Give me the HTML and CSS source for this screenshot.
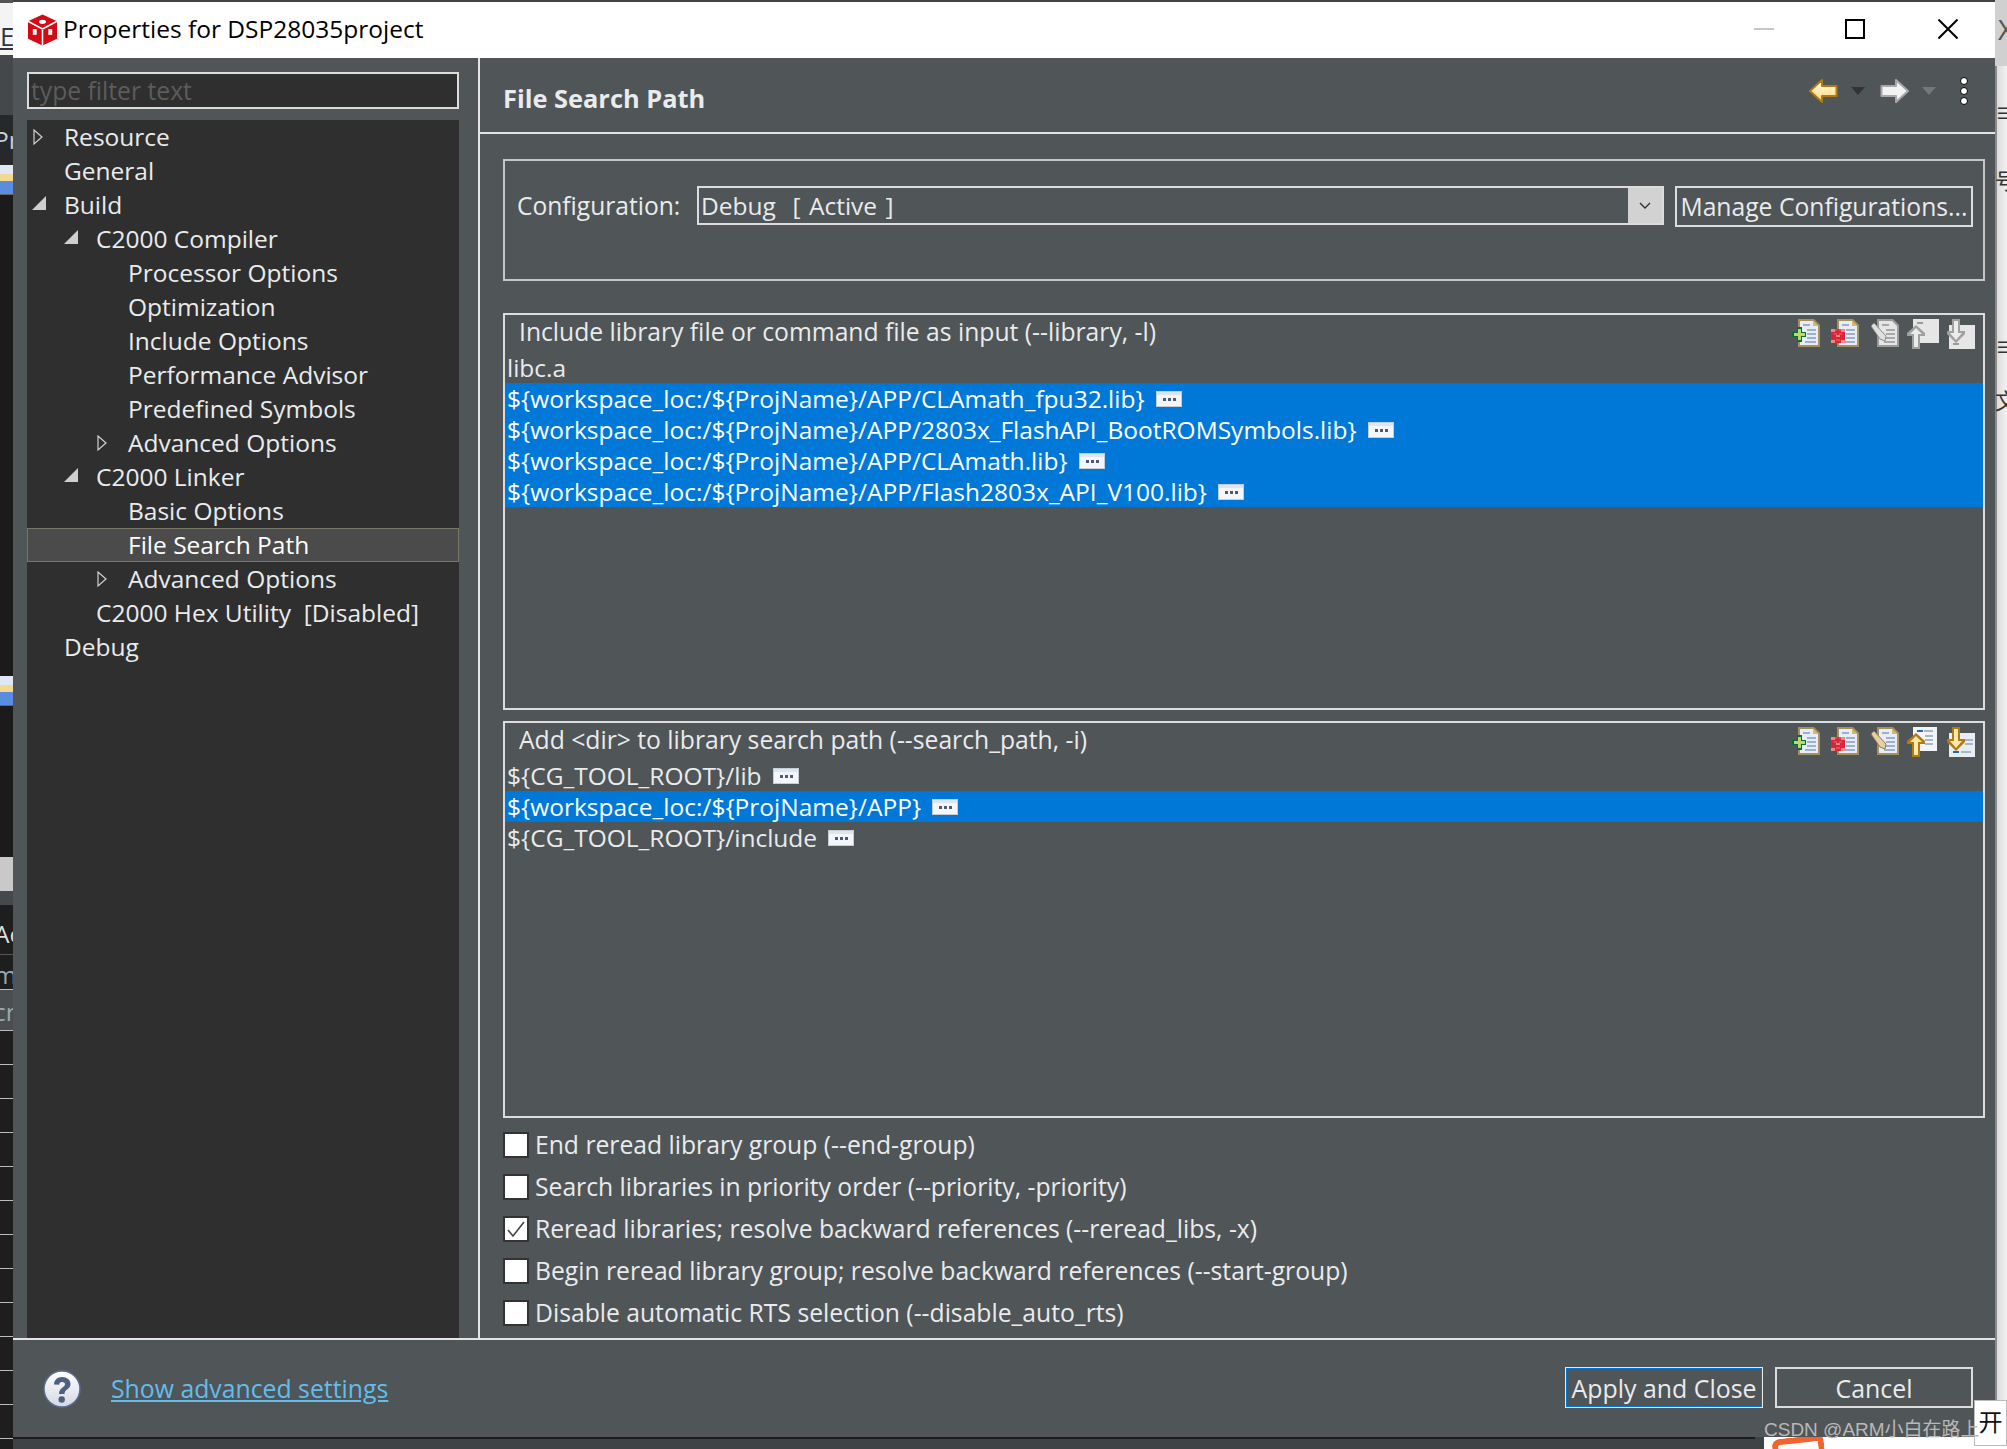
FILE: index.html
```html
<!DOCTYPE html>
<html lang="en">
<head>
<meta charset="utf-8">
<title>Properties for DSP28035project</title>
<link rel="stylesheet" href="styles.css">
</head>
<body>
<svg class="defs" width="0" height="0" aria-hidden="true">
  <defs>
    <g id="page">
      <path d="M6 0H22L28 6V28H6Z" fill="#a8905c"/>
      <path d="M8 2H21L26 7V26H8Z" fill="#e6ecf8"/>
      <path d="M21 2L26 7H21Z" fill="#d9b76a"/>
      <path d="M11 5h7v2h-7zM15 10h9v2h-9zM15 14h9v2h-9zM15 18h9v2h-9zM13 22h11v2H13z" fill="#9fb0cc"/>
    </g>
    <g id="pageGray">
      <path d="M6 0H22L28 6V28H6Z" fill="#9a9a9a"/>
      <path d="M8 2H21L26 7V26H8Z" fill="#e6e6e6"/>
      <path d="M11 5h7v2h-7zM15 10h9v2h-9zM15 14h9v2h-9zM15 18h9v2h-9zM13 22h11v2H13z" fill="#a8a8a8"/>
    </g>
    <g id="plus">
      <path d="M5 8h5v5h4v5h-4v5H5v-5H0v-5h5z" fill="#0c6a3a"/>
      <path d="M6 10h3v4h4v3H9v4H6v-4H2v-3h4z" fill="#bcd86a"/>
    </g>
    <g id="cross">
      <path d="M0 10h14v14H0z" fill="#d7263d"/>
      <path d="M0 10h4v3H0zM10 10h4v3h-4zM5 16h4v2H5zM0 21h4v3H0zM10 21h4v3h-4z" fill="#e88a8a"/>
      <path d="M4 10h2v2H4zM8 10h2v2H8zM3 14h3v2H3zM8 14h3v2H8zM5 20h4v2H5z" fill="#f2444f"/>
    </g>
    <g id="pen">
      <path d="M0 7l3-3 12 13-1 5-5-2z" fill="#e6d0a0" stroke="#8a7a58"/>
    </g>
    <g id="penGray">
      <path d="M0 7l3-3 12 13-1 5-5-2z" fill="#e0e0e0" stroke="#8c8c8c"/>
    </g>
    <g id="back">
      <path d="M6 0h24v24H6z" fill="#f2f4f8"/>
      <path d="M10 3h6v2h-6zM17 3h9v2h-9zM18 8h8v2h-8zM18 12h8v2h-8zM18 16h8v2h-8z" fill="#a8b6cc"/>
      <path d="M10 3h6v2h-6z" fill="#2468a8"/>
    </g>
    <g id="backDown">
      <path d="M2 6h26v24H2z" fill="#e8ecf4"/>
      <path d="M6 24h6v2H6z" fill="#2468a8"/>
      <path d="M14 24h10v2H14zM18 12h8v2h-8zM18 16h8v2h-8z" fill="#a8b6cc"/>
    </g>
    <g id="backGray"><path d="M6 0h26v24H6z" fill="#e6e6e6"/><path d="M10 3h6v2h-6z" fill="#9a9a9a"/></g>
    <g id="backDownGray"><path d="M2 6h26v24H2z" fill="#e6e6e6"/><path d="M6 24h6v2H6z" fill="#9a9a9a"/></g>
    <symbol id="i-add" viewBox="0 0 28 28"><use href="#page"/><use href="#plus"/></symbol>
    <symbol id="i-del" viewBox="0 0 28 28"><use href="#page"/><use href="#cross"/></symbol>
    <symbol id="i-edit" viewBox="0 0 28 28"><use href="#page"/><use href="#pen"/></symbol>
    <symbol id="i-edit-off" viewBox="0 0 28 28"><use href="#pageGray"/><use href="#penGray"/></symbol>
    <symbol id="i-up" viewBox="0 0 32 32"><use href="#back"/><path d="M9 6L18 14V17H13V30H5V17H0V14Z" fill="#b07a14"/><path d="M9 9L15 15H11V28H7V15H3Z" fill="#ffe9a8"/></symbol>
    <symbol id="i-down" viewBox="0 0 32 32"><use href="#backDown"/><path d="M5 0H13V12H18V15L9 24L0 15V12H5Z" fill="#b07a14"/><path d="M7 2H11V14H15L9 21L3 14H7Z" fill="#ffe9a8"/></symbol>
    <symbol id="i-up-off" viewBox="0 0 32 32"><use href="#backGray"/><path d="M9 6L18 14V17H13V30H5V17H0V14Z" fill="#a0a0a0"/><path d="M9 9L15 15H11V28H7V15H3Z" fill="#ececec"/></symbol>
    <symbol id="i-down-off" viewBox="0 0 32 32"><use href="#backDownGray"/><path d="M5 0H13V12H18V15L9 24L0 15V12H5Z" fill="#a0a0a0"/><path d="M7 2H11V14H15L9 21L3 14H7Z" fill="#ececec"/></symbol>
    <symbol id="i-more" viewBox="0 0 26 16"><rect width="26" height="16" fill="#f4f6fa"/><rect x="0.5" y="0.5" width="25" height="15" fill="none" stroke="#c4ccd8"/><rect x="1" y="1" width="24" height="3" fill="#dfe5ee"/><path d="M7 7h3v3H7zM12 7h3v3h-3zM17 7h3v3h-3z" fill="#4a5a78"/></symbol>
    <symbol id="t-closed" viewBox="0 0 10 16"><path d="M1 1L9 8L1 15Z" fill="none" stroke="#d0d0d0" stroke-width="1.2"/></symbol>
    <symbol id="t-open" viewBox="0 0 14 14"><path d="M14 0V14H0Z" fill="#cfcfcf"/></symbol>
  </defs>
</svg>

<div class="behind behind-left">
  <div class="bl-title">E</div>
  <div class="bl-bar"></div>
  <div class="bl-pr"><span class="bl-shift">Pr</span></div>
  <div class="bl-icon"></div>
  <div class="bl-dark"></div>
  <div class="bl-icon"></div>
  <div class="bl-dark bl-dark-2"></div>
  <div class="bl-light"></div>
  <div class="bl-grey"></div>
  <div class="bl-band"><span class="bl-shift">Ac</span></div>
  <div class="bl-band bl-thin"><span class="bl-shift">m</span></div>
  <div class="bl-band bl-thin bl-sel"><span class="bl-shift">cr</span></div>
  <div class="bl-lines"></div>
</div>
<div class="behind behind-right">
  <div class="br-top">X</div>
  <div class="br-seg br-a">&#x2261;</div>
  <div class="br-seg br-b">&#x53F7;</div>
  <div class="br-seg br-c">&#x2261;</div>
  <div class="br-seg br-d">&#x6587;</div>
</div>
<div class="behind behind-bottom">
  <div class="bb-line"></div>
  <div class="bb-white"><span class="bb-orange"></span></div>
</div>

<main class="dialog">
  <header class="titlebar">
    <svg class="logo" viewBox="0 0 32 32" aria-hidden="true">
      <path d="M16 0L31 7V25L16 32L1 25V7Z" fill="#d40a14"/>
      <path d="M16 16V32M16 15L1 7M16 15L31 7" stroke="#fff" stroke-width="1.6" fill="none"/>
      <ellipse cx="16" cy="7.5" rx="3.6" ry="2.2" fill="#fff"/>
      <rect x="6" y="15" width="4" height="6" fill="#fff"/>
      <rect x="22" y="15" width="4" height="6" fill="#fff"/>
    </svg>
    <span class="title-text">Properties for DSP28035project</span>
    <div class="win-controls">
      <span class="win-min"></span>
      <span class="win-max"></span>
      <svg class="win-close" viewBox="0 0 20 20" aria-hidden="true"><path d="M0.5 0.5L19.5 19.5M19.5 0.5L0.5 19.5" stroke="#000" stroke-width="2"/></svg>
    </div>
  </header>

  <div class="main">
    <aside class="side">
      <div class="filter">type filter text</div>
      <ul class="tree">
        <li class="node l0"><span class="twisty"><svg class="tw-c"><use href="#t-closed"/></svg></span>Resource</li>
        <li class="node l0"><span class="twisty"></span>General</li>
        <li class="node l0"><span class="twisty"><svg class="tw-o"><use href="#t-open"/></svg></span>Build</li>
        <li class="node l1"><span class="twisty"><svg class="tw-o"><use href="#t-open"/></svg></span>C2000 Compiler</li>
        <li class="node l2"><span class="twisty"></span>Processor Options</li>
        <li class="node l2"><span class="twisty"></span>Optimization</li>
        <li class="node l2"><span class="twisty"></span>Include Options</li>
        <li class="node l2"><span class="twisty"></span>Performance Advisor</li>
        <li class="node l2"><span class="twisty"></span>Predefined Symbols</li>
        <li class="node l2"><span class="twisty"><svg class="tw-c"><use href="#t-closed"/></svg></span>Advanced Options</li>
        <li class="node l1"><span class="twisty"><svg class="tw-o"><use href="#t-open"/></svg></span>C2000 Linker</li>
        <li class="node l2"><span class="twisty"></span>Basic Options</li>
        <li class="node l2 current"><span class="twisty"></span>File Search Path</li>
        <li class="node l2"><span class="twisty"><svg class="tw-c"><use href="#t-closed"/></svg></span>Advanced Options</li>
        <li class="node l1"><span class="twisty"></span>C2000 Hex Utility&nbsp; [Disabled]</li>
        <li class="node l0"><span class="twisty"></span>Debug</li>
      </ul>
    </aside>

    <section class="content">
      <div class="page-head">
        <h1 class="page-title">File Search Path</h1>
        <div class="nav">
          <svg class="nav-arrow" viewBox="0 0 29 24" aria-hidden="true"><defs><linearGradient id="gold" x1="0" y1="0" x2="0" y2="1"><stop offset="0" stop-color="#fffdf0"/><stop offset="1" stop-color="#ffd66e"/></linearGradient></defs><path d="M13 1L1 12L13 23V17H27.5V7H13Z" fill="url(#gold)" stroke="#b07a14" stroke-width="2" stroke-linejoin="round"/></svg>
          <span class="nav-drop"></span>
          <svg class="nav-arrow fwd" viewBox="0 0 29 24" aria-hidden="true"><path d="M16 1L28 12L16 23V17H1.5V7H16Z" fill="#f2f2f2" stroke="#a8a8a8" stroke-width="2" stroke-linejoin="round"/></svg>
          <span class="nav-drop off"></span>
          <div class="kebab"><i></i><i></i><i></i></div>
        </div>
      </div>

      <div class="body">
        <div class="config">
          <span class="config-label">Configuration:</span>
          <div class="combo"><span class="combo-text">Debug&nbsp; [ Active ]</span><span class="combo-btn"><svg viewBox="0 0 12 8" aria-hidden="true"><path d="M1 1L6 6L11 1" fill="none" stroke="#333" stroke-width="1.4"/></svg></span></div>
          <button class="btn manage">Manage Configurations...</button>
        </div>

        <section class="list">
          <div class="list-head">
            <span class="list-title">Include library file or command file as input (--library, -l)</span>
            <div class="tools">
              <svg class="tool t1"><use href="#i-add"/></svg>
              <svg class="tool t2"><use href="#i-del"/></svg>
              <svg class="tool t3"><use href="#i-edit-off"/></svg>
              <svg class="tool t4"><use href="#i-up-off"/></svg>
              <svg class="tool t5"><use href="#i-down-off"/></svg>
            </div>
          </div>
          <div class="row">libc.a</div>
          <div class="row sel">${workspace_loc:/${ProjName}/APP/CLAmath_fpu32.lib}<svg class="more"><use href="#i-more"/></svg></div>
          <div class="row sel">${workspace_loc:/${ProjName}/APP/2803x_FlashAPI_BootROMSymbols.lib}<svg class="more"><use href="#i-more"/></svg></div>
          <div class="row sel">${workspace_loc:/${ProjName}/APP/CLAmath.lib}<svg class="more"><use href="#i-more"/></svg></div>
          <div class="row sel">${workspace_loc:/${ProjName}/APP/Flash2803x_API_V100.lib}<svg class="more"><use href="#i-more"/></svg></div>
        </section>

        <section class="list">
          <div class="list-head">
            <span class="list-title">Add &lt;dir&gt; to library search path (--search_path, -i)</span>
            <div class="tools">
              <svg class="tool t1"><use href="#i-add"/></svg>
              <svg class="tool t2"><use href="#i-del"/></svg>
              <svg class="tool t3"><use href="#i-edit"/></svg>
              <svg class="tool t4"><use href="#i-up"/></svg>
              <svg class="tool t5"><use href="#i-down"/></svg>
            </div>
          </div>
          <div class="row">${CG_TOOL_ROOT}/lib<svg class="more"><use href="#i-more"/></svg></div>
          <div class="row sel">${workspace_loc:/${ProjName}/APP}<svg class="more"><use href="#i-more"/></svg></div>
          <div class="row">${CG_TOOL_ROOT}/include<svg class="more"><use href="#i-more"/></svg></div>
        </section>

        <div class="checks">
          <label class="check"><span class="box"></span><span class="check-text">End reread library group (--end-group)</span></label>
          <label class="check"><span class="box"></span><span class="check-text">Search libraries in priority order (--priority, -priority)</span></label>
          <label class="check"><span class="box"><svg viewBox="0 0 22 22" aria-hidden="true"><path d="M3 12L8 18L19 4" fill="none" stroke="#444" stroke-width="1.6"/></svg></span><span class="check-text">Reread libraries; resolve backward references (--reread_libs, -x)</span></label>
          <label class="check"><span class="box"></span><span class="check-text">Begin reread library group; resolve backward references (--start-group)</span></label>
          <label class="check"><span class="box"></span><span class="check-text">Disable automatic RTS selection (--disable_auto_rts)</span></label>
        </div>
      </div>
    </section>
  </div>

  <footer class="footer">
    <svg class="help" viewBox="0 0 38 38" aria-hidden="true">
      <defs><linearGradient id="helpg" x1="0" y1="0" x2="0" y2="1"><stop offset="0" stop-color="#ffffff"/><stop offset="1" stop-color="#d4d8e2"/></linearGradient></defs>
      <circle cx="19" cy="19" r="18" fill="url(#helpg)" stroke="#5a6c90" stroke-width="1.5"/>
      <path d="M11 14.5C11 10 14.5 7 19 7C24 7 27.5 10 27.5 14C27.5 19.5 21.5 19 21.5 24H16C16 17.5 22 17.5 22 14.2C22 12.8 20.8 12 19 12C17.2 12 16.2 13 16.2 14.8Z" fill="#4f5f80"/>
      <circle cx="18.7" cy="29.5" r="3.2" fill="#4f5f80"/>
    </svg>
    <a class="link" href="#">Show advanced settings</a>
    <div class="actions">
      <button class="btn action primary">Apply and Close</button>
      <button class="btn action">Cancel</button>
    </div>
  </footer>
</main>

<div class="tip">&#x5F00;</div>
<div class="watermark">CSDN @ARM小白在路上</div>
</body>
</html>
```
FILE: styles.css
```css
* { box-sizing: border-box; }
html, body { margin: 0; padding: 0; }
body {
  position: relative;
  width: 2007px;
  height: 1449px;
  overflow: hidden;
  background: #3f4346;
  font-family: "Open Sans", "Noto Sans", "Noto Sans CJK SC", sans-serif;
  font-size: 24.5px;
  color: #e9ebec;
}
.defs { position: absolute; }

/* windows behind the dialog */
.behind { position: absolute; overflow: hidden; }
.behind-left { left: 0; top: 0; width: 13px; height: 1449px; background: #1b1b1b; display: flex; flex-direction: column; }
.bl-title { height: 55px; padding-top: 18px; background: #f4f4f4; color: #334; font-size: 26px; line-height: 30px; text-decoration: underline; flex: none; border-top: 3px solid #555; }
.bl-bar { height: 60px; background: #44484b; flex: none; }
.bl-pr { height: 50px; background: #26282a; color: #c9d2dc; line-height: 50px; flex: none; white-space: nowrap; }
.bl-shift { display: block; margin-left: -6px; white-space: nowrap; }
.bl-icon { height: 30px; flex: none; background: linear-gradient(#dfe6f4 0 30%, #f4d890 30% 55%, #5a8ce0 55% 100%); border-bottom: 1px solid #666; }
.bl-dark { height: 481px; background: #1b1b1b; flex: none; }
.bl-dark-2 { height: 151px; }
.bl-light { height: 34px; background: #c9c9c9; flex: none; }
.bl-grey { height: 14px; background: #45494c; flex: none; }
.bl-band { height: 49px; background: #1e1e1e; color: #ddd; line-height: 58px; flex: none; }
.bl-thin { height: 35px; line-height: 40px; color: #9aa; border-top: 1px solid #555; }
.bl-sel { background: #4a4e51; height: 42px; line-height: 44px; border-top: 1px solid #bbb; border-bottom: 1px solid #bbb; }
.bl-lines { flex: 1; background: repeating-linear-gradient(#1e1e1e 0 33px, #bdbdbd 33px 34px); }

.behind-right { left: 1995px; top: 0; width: 12px; height: 1400px; background: linear-gradient(90deg, #8a8a8a 0 2px, #dcdcdc 2px, #f2f2f2); color: #333; font-size: 22px; }
.br-top { height: 66px; background: #d0d0d0; line-height: 58px; color: #555; font-size: 28px; padding-left: 3px; }
.br-seg { position: absolute; left: 0; line-height: 24px; }
.br-a { top: 100px; }
.br-b { top: 168px; }
.br-c { top: 334px; }
.br-d { top: 388px; }

.behind-bottom { left: 0; top: 1437px; width: 2007px; height: 12px; }
.bb-line { position: absolute; left: 13px; width: 1742px; top: 0; height: 2px; background: #1d1d1d; }
.bb-white { position: absolute; left: 1764px; top: 0; width: 243px; height: 12px; background: #fff; }
.bb-orange { position: absolute; left: 8px; top: 0; width: 52px; height: 16px; border: 6px solid #f0652f; border-bottom: 0; border-radius: 8px 6px 0 0; transform: rotate(-6deg); }

/* dialog window */
.dialog {
  position: absolute;
  left: 13px;
  top: 2px;
  width: 1982px;
  height: 1435px;
  display: flex;
  flex-direction: column;
  background: #505558;
}
.titlebar {
  flex: none;
  height: 56px;
  background: #fff;
  color: #000;
  display: flex;
  align-items: center;
  padding: 0 37px 0 14px;
}
.logo { width: 31px; height: 32px; flex: none; margin-right: 5px; }
.title-text { font-size: 24.5px; position: relative; top: -2px; }
.win-controls { margin-left: auto; display: flex; align-items: center; position: relative; top: -1px; }
.win-min { width: 20px; height: 2px; background: #c8c8c8; margin-right: 71px; }
.win-max { width: 20px; height: 20px; border: 2px solid #000; margin-right: 73px; }
.win-close { width: 20px; height: 20px; }

.main { flex: 1; min-height: 0; display: flex; }

.side {
  flex: none;
  width: 467px;
  padding: 14px 19px 0 14px;
  border-right: 2px solid #e4e4e4;
  display: flex;
  flex-direction: column;
}
.filter {
  flex: none;
  height: 37px;
  border: 2px solid #dcdcdc;
  background: #2f2f2f;
  color: #5c5c5c;
  padding-left: 2px;
  line-height: 33px;
  margin-bottom: 11px;
  font-size: 24.7px;
}
.tree {
  flex: 1;
  list-style: none;
  margin: 0;
  padding: 0;
  background: #2f2f2f;
}
.node { height: 34px; line-height: 33px; display: flex; white-space: pre; }
.twisty { flex: none; width: 32px; display: flex; align-items: center; }
.l0 { padding-left: 5px; }
.l1 { padding-left: 37px; }
.l2 { padding-left: 69px; }
.tw-c { width: 10px; height: 16px; margin-left: 1px; }
.tw-o { width: 14px; height: 14px; margin-top: -4px; }
.current { background: #4b4b4b; border: 1px solid #78786a; color: #fff; line-height: 31px; padding-left: 68px; }

.content { flex: 1; min-width: 0; display: flex; flex-direction: column; }
.page-head {
  flex: none;
  height: 76px;
  border-bottom: 2px solid #e4e4e4;
  display: flex;
  align-items: center;
  padding: 0 27px 0 23px;
}
.page-title { margin: 0; font-size: 25.4px; font-weight: 700; color: #e9ebec; position: relative; top: 3px; }
.nav { margin-left: auto; display: flex; align-items: center; margin-top: -9px; }
.nav-arrow { width: 29px; height: 24px; flex: none; }
.nav-drop { width: 0; height: 0; border: 7px solid transparent; border-top: 8px solid #333; border-bottom: 0; margin: 0 15px 0 13px; }
.nav-drop.off { border-top-color: #777; margin-right: 24px; }
.kebab { display: flex; flex-direction: column; gap: 2px; }
.kebab i { display: block; width: 8px; height: 8px; border-radius: 50%; background: #fff; border: 1px solid #000; }

.body { flex: 1; min-height: 0; padding: 25px 10px 0 23px; display: flex; flex-direction: column; }

.config {
  flex: none;
  height: 122px;
  border: 2px solid #c4c6c7;
  margin-bottom: 32px;
  padding: 25px 10px 0 12px;
  display: flex;
  align-items: flex-start;
}
.config-label { width: 180px; flex: none; line-height: 39px; font-size: 24.6px; }
.combo {
  flex: 1;
  height: 39px;
  border: 2px solid #dcdcdc;
  display: flex;
  align-items: center;
  margin-right: 11px;
  background: #505558;
}
.combo-text { flex: 1; padding-left: 2px; white-space: pre; word-spacing: 2px; }
.combo-btn { flex: none; width: 34px; height: 100%; background: #d2d2d2; display: flex; align-items: center; justify-content: center; }
.combo-btn svg { width: 12px; height: 8px; }

.btn {
  font: inherit;
  color: inherit;
  background: #505558;
  border: 2px solid #dcdcdc;
  padding: 0;
}
.manage { width: 298px; height: 41px; flex: none; font-size: 24.7px; }

.list {
  flex: none;
  height: 397px;
  border: 2px solid #dcdcdc;
  margin-bottom: 11px;
}
.list + .checks { margin-top: 3px; }
.list-head { height: 37px; display: flex; align-items: center; padding-left: 14px; position: relative; }
.list-title { line-height: 35px; font-size: 24.7px; position: relative; top: -2px; }
.tools { margin-left: auto; display: flex; height: 37px; position: relative; width: 191px; }
.tool { position: absolute; width: 28px; height: 28px; top: 4px; }
.t1 { left: 0; }
.t2 { left: 39px; }
.t3 { left: 79px; }
.t4 { left: 115px; width: 32px; height: 32px; }
.t5 { left: 155px; width: 32px; height: 32px; }

.row { height: 31px; line-height: 30px; padding-left: 2px; display: flex; align-items: center; white-space: pre; }
.row.sel { background: #0078d7; color: #fff; }
.more { width: 26px; height: 16px; margin-left: 11px; flex: none; }

.checks { display: flex; flex-direction: column; gap: 16px; }
.check { display: flex; align-items: center; height: 26px; }
.box { width: 26px; height: 26px; flex: none; border: 2px solid #333; background: #fff; margin-right: 6px; display: flex; }
.box svg { width: 22px; height: 22px; }
.check-text { font-size: 24.7px; position: relative; top: -1px; }

.footer {
  flex: none;
  height: 99px;
  border-top: 2px solid #e4e4e4;
  display: flex;
  align-items: center;
  padding: 0 22px 0 30px;
}
.help { width: 38px; height: 38px; flex: none; margin-right: 30px; }
.link { color: #62bdec; text-decoration: underline; font-size: 24.8px; position: relative; top: -1px; }
.actions { margin-left: auto; display: flex; gap: 12px; margin-top: -2px; }
.action { width: 198px; height: 41px; font-size: 24.9px; }
.primary { border: 2px solid #0078d7; outline: 1px solid #e8e8e8; outline-offset: -1px; }

.tip {
  position: absolute;
  left: 1974px;
  top: 1400px;
  width: 33px;
  height: 46px;
  background: #fff;
  border: 1px solid #bbb;
  color: #111;
  font-family: "Noto Sans CJK SC", sans-serif;
  font-size: 24px;
  line-height: 40px;
  text-align: center;
}
.watermark {
  position: absolute;
  left: 1764px;
  top: 1418px;
  font-family: "Liberation Sans", "Noto Sans CJK SC", sans-serif;
  font-size: 19px;
  line-height: 24px;
  color: #b8b8b8;
  white-space: nowrap;
}
```
